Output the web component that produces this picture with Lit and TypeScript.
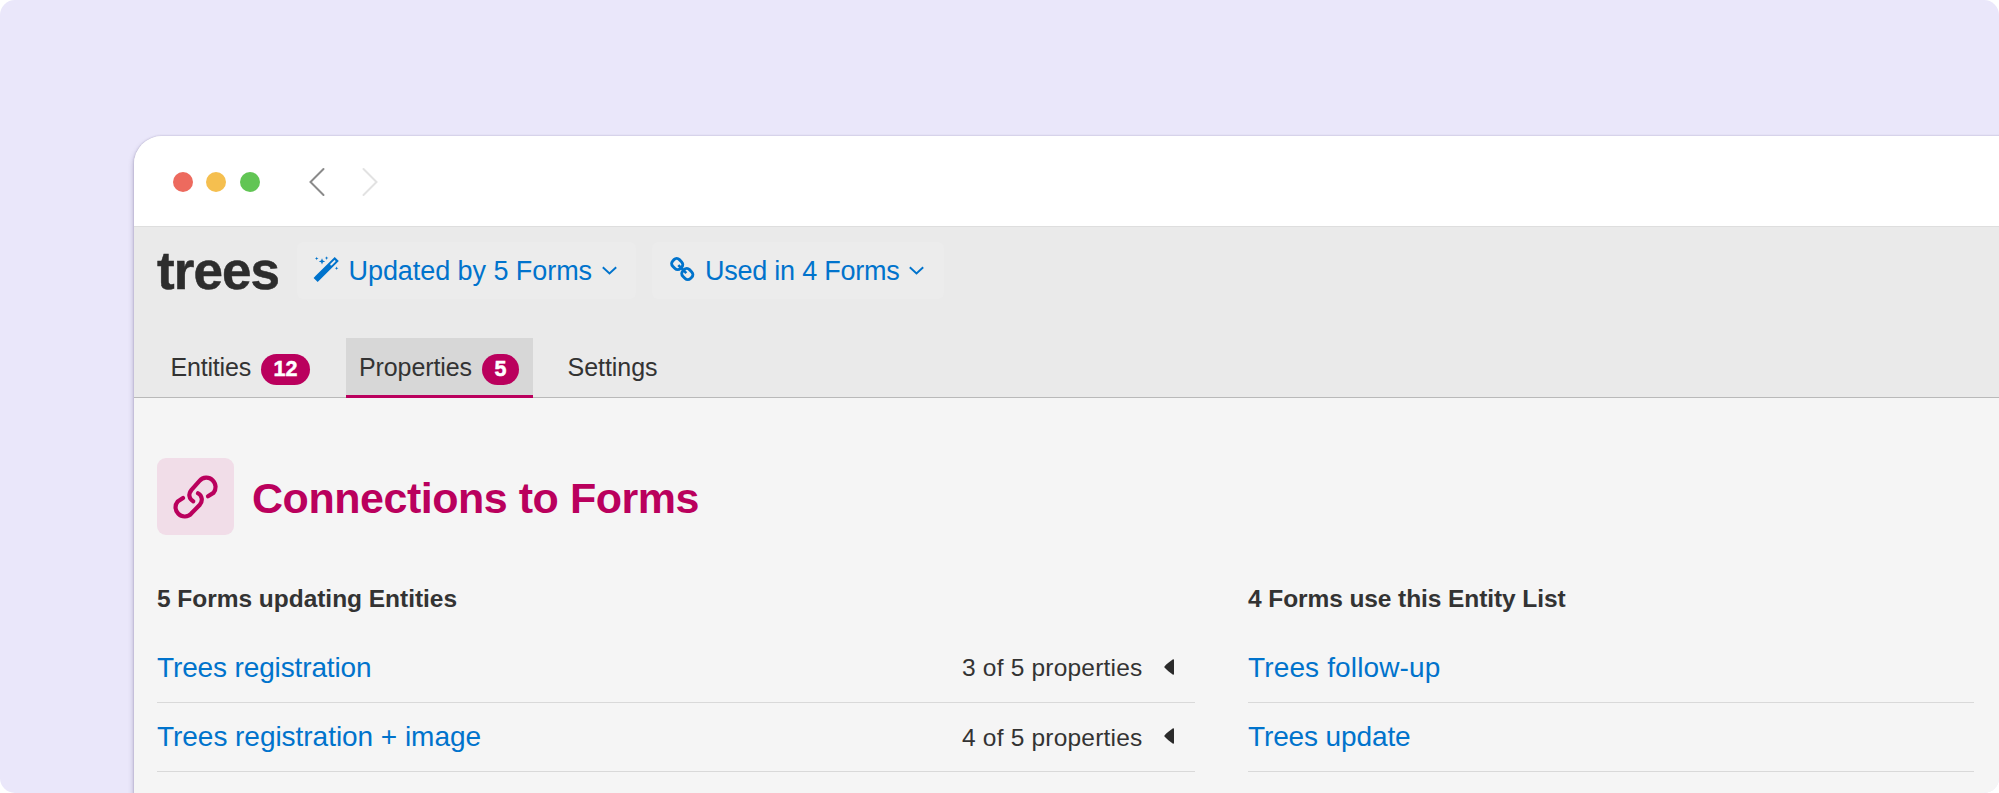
import { LitElement, html, css, svg } from "lit";
import { customElement, property } from "lit/decorators.js";

@customElement("fit-text")
class FitText extends LitElement {
  @property({ type: Number }) w = 0;
  static styles = css`
    :host { display: inline-block; white-space: nowrap; }
  `;
  render() {
    return html`<slot></slot>`;
  }
  async firstUpdated() {
    await document.fonts.ready;
    const n = (this.textContent || "").length;
    const natural = this.getBoundingClientRect().width;
    this.style.letterSpacing = (this.w - natural) / n + "px";
  }
}

const wand = svg`<svg width="26" height="26" viewBox="0 0 26 26">
  <path d="M4.700 20.900 21.700 4" stroke="#0073cc" stroke-width="5.800" stroke-linecap="square"/>
  <path d="M18.200 7.500 21.600 4.100" stroke="#ececec" stroke-width="1.900" stroke-linecap="round"/>
  <path fill="#0073cc" d="M9 1.200l.9 2.300 2.300.9-2.300.9L9 7.600l-.9-2.300-2.300-.9 2.300-.9zM3.700-.3l.5 1.300 1.300.5-1.300.5-.5 1.300L3.200 2l-1.300-.5L3.200 1zM13.600-.7l.5 1.300 1.300.5-1.300.5-.5 1.300-.5-1.300-1.300-.5 1.300-.5zM23.600 9.500l.5 1.300 1.300.5-1.300.5-.5 1.300-.5-1.300-1.300-.5 1.300-.5z"/></svg>`;

const chain = svg`<svg width="26" height="26" viewBox="0 0 26 26" fill="none" stroke="#0073cc" stroke-width="2.900">
  <rect x="2.800" y="2.400" width="10.800" height="9.400" rx="3.800" transform="rotate(45 8.200 7.100)"/>
  <rect x="12.900" y="12.400" width="10.800" height="9.400" rx="3.800" transform="rotate(45 18.300 17.100)"/>
  <path d="M9.300 8.200l8 8" stroke-width="2.600"/></svg>`;

const caret = svg`<svg class="caret" width="15" height="9" viewBox="0 0 15 9" fill="none" stroke="#0073cc" stroke-width="1.900"><path d="M.8 1.200 7.500 7.500 14.200 1.200"/></svg>`;

@customElement("app-root")
class AppRoot extends LitElement {
  static styles = css`
    :host {
      display: block; height: 793px; overflow: hidden; background: #fff;
      font-family: "Liberation Sans", Arial, sans-serif; color: #333;
    }
    * { box-sizing: border-box; }
    svg { display: block; flex: none; overflow: visible; }
    .stage { height: 793px; padding: 135.500px 0 0 133.500px; border-radius: 15px; background: #eae7fa; overflow: hidden; }
    .window {
      width: 1900px; height: 700px; border-radius: 28px 0 0 0; background: #f5f5f5; overflow: hidden;
      box-shadow: 0 0 2px rgba(70, 60, 110, .35), -1px 3px 5px rgba(70, 60, 110, .25);
    }
    .bar { height: 91px; background: #fff; border-bottom: 1px solid #dedede; display: flex; align-items: center; padding: 2px 0 0 39.500px; }
    .dots { display: flex; gap: 13.300px; }
    .dot { width: 20px; height: 20px; border-radius: 50%; }
    .red { background: #ed6a5e; }
    .amber { background: #f5bf4f; }
    .green { background: #61c554; }
    .nav { display: flex; gap: 38px; margin-left: 49px; }
    .head { height: 171.500px; background: #eaeaea; border-bottom: 1.500px solid #b9b9b9; padding: 15px 0 0 23.500px; }
    .title { display: flex; height: 57px; align-items: center; }
    .name { font-size: 53px; line-height: 57px; font-weight: 700; height: 57px; color: #2d2d2d; -webkit-text-stroke: .5px #2d2d2d; }
    .btn { display: flex; align-items: center; height: 57px; border-radius: 6px; background: #ececec; color: #0073cc; font-size: 27px; line-height: 57px; }
    .btn1 { width: 339px; margin-left: 17.500px; padding-left: 16px; }
    .btn2 { width: 292px; margin-left: 16.500px; padding-left: 17px; }
    .btn fit-text { margin: 2px 0 0 10px; }
    .caret { margin: 1px 0 0 9.500px; }
    .tabs { display: flex; height: 60px; margin-top: 39.500px; font-size: 25px; line-height: 59px; }
    .tab { display: flex; height: 60px; }
    .t1 { width: 188.500px; padding-left: 13.500px; }
    .t2 { width: 187px; padding-left: 13.500px; background: #d7d7d7; border-bottom: 3px solid #ba005d; }
    .t3 { padding-left: 35px; }
    .badge { height: 31px; margin: 15.500px 0 0 10px; border-radius: 16px; background: #ba005d; color: #fff; font-size: 21.500px; line-height: 31px; font-weight: 700; text-align: center; -webkit-text-stroke: .5px #fff; }
    .b12 { width: 49px; }
    .b5 { width: 37px; }
    .body { padding: 60px 0 0 23.500px; }
    .section { display: flex; height: 77px; align-items: center; }
    .tile { width: 77px; height: 77px; border-radius: 9px; background: #f1dde8; }
    h1 { margin: 2px 0 0 18px; font-size: 43px; line-height: 48px; color: #ba005d; }
    .cols { display: flex; gap: 53px; padding-top: 46px; }
    .left { width: 1038px; }
    .right { width: 726px; }
    h2 { margin: 0; font-size: 24.500px; line-height: 36px; height: 52px; }
    .row { display: flex; align-items: center; justify-content: space-between; height: 69.500px; border-bottom: 1.500px solid #d9d9d9; }
    .link { color: #0073cc; font-size: 28px; line-height: 32px; margin-top: 1px; }
    .meta { display: flex; align-items: center; font-size: 24.500px; line-height: 30px; padding: 2px 21.500px 0 0; }
    .tri { margin: -3px 0 0 21px; }
  `;

  row(name: string, w: number, meta?: string) {
    return html`<div class="row">
      <fit-text class="link" w=${w}>${name}</fit-text>
      ${meta
        ? html`<div class="meta"><fit-text w="180.500">${meta}</fit-text>
            <svg class="tri" width="10" height="16" viewBox="0 0 10 16"><path fill="#2b2b2b" d="M9 .2Q10 0 10 1v14q0 1-1 .8C6 13.800 2.500 11 .5 8.600Q0 8 .5 7.400C2.500 5 6 2.200 9 .2z"/></svg></div>`
        : ""}
    </div>`;
  }

  render() {
    return html`<div class="stage"><div class="window">
      <div class="bar">
        <div class="dots"><div class="dot red"></div><div class="dot amber"></div><div class="dot green"></div></div>
        <div class="nav">
          <svg width="16" height="28" viewBox="0 0 16 28" fill="none" stroke="#8a8a8a" stroke-width="2" stroke-linecap="round"><path d="M14.500 1 1.500 14l13 13"/></svg>
          <svg width="16" height="28" viewBox="0 0 16 28" fill="none" stroke="#e2e2e2" stroke-width="2" stroke-linecap="round"><path d="M.5 1l13 13-13 13"/></svg>
        </div>
      </div>
      <div class="head">
        <div class="title">
          <fit-text class="name" w="122">trees</fit-text>
          <div class="btn btn1">${wand}<fit-text w="243.500">Updated by 5 Forms</fit-text>${caret}</div>
          <div class="btn btn2">${chain}<fit-text w="194.500">Used in 4 Forms</fit-text>${caret}</div>
        </div>
        <div class="tabs">
          <div class="tab t1"><fit-text w="80.500">Entities</fit-text><div class="badge b12">12</div></div>
          <div class="tab t2"><fit-text w="113">Properties</fit-text><div class="badge b5">5</div></div>
          <div class="tab t3"><fit-text w="90">Settings</fit-text></div>
        </div>
      </div>
      <div class="body">
        <div class="section">
          <div class="tile"><svg width="77" height="77" viewBox="0 0 77 77" fill="none" stroke="#ba005d" stroke-width="4.200" stroke-linecap="round"><path d="M36.300 43.300C32 41 31 36 34.500 31.800L42.500 22.800C46 18.800 52 18.600 55.600 22.200C59.500 26 59.300 31.500 56.500 34.800L51 38.300"/><path d="M41 35.300C45.300 37.800 46 42.800 42.800 46.800L34.500 55.300C31 59.300 25 59.600 21.300 55.800C17.600 52 17.900 46.800 20.600 43.600L26 40"/></svg></div>
          <h1><fit-text w="447">Connections to Forms</fit-text></h1>
        </div>
        <div class="cols">
          <div class="left">
            <h2><fit-text w="300">5 Forms updating Entities</fit-text></h2>
            ${this.row("Trees registration", 214.5, "3 of 5 properties")}
            ${this.row("Trees registration + image", 324, "4 of 5 properties")}
          </div>
          <div class="right">
            <h2><fit-text w="317.500">4 Forms use this Entity List</fit-text></h2>
            ${this.row("Trees follow-up", 192.5)}
            ${this.row("Trees update", 162.5)}
          </div>
        </div>
      </div>
    </div></div>`;
  }
}
